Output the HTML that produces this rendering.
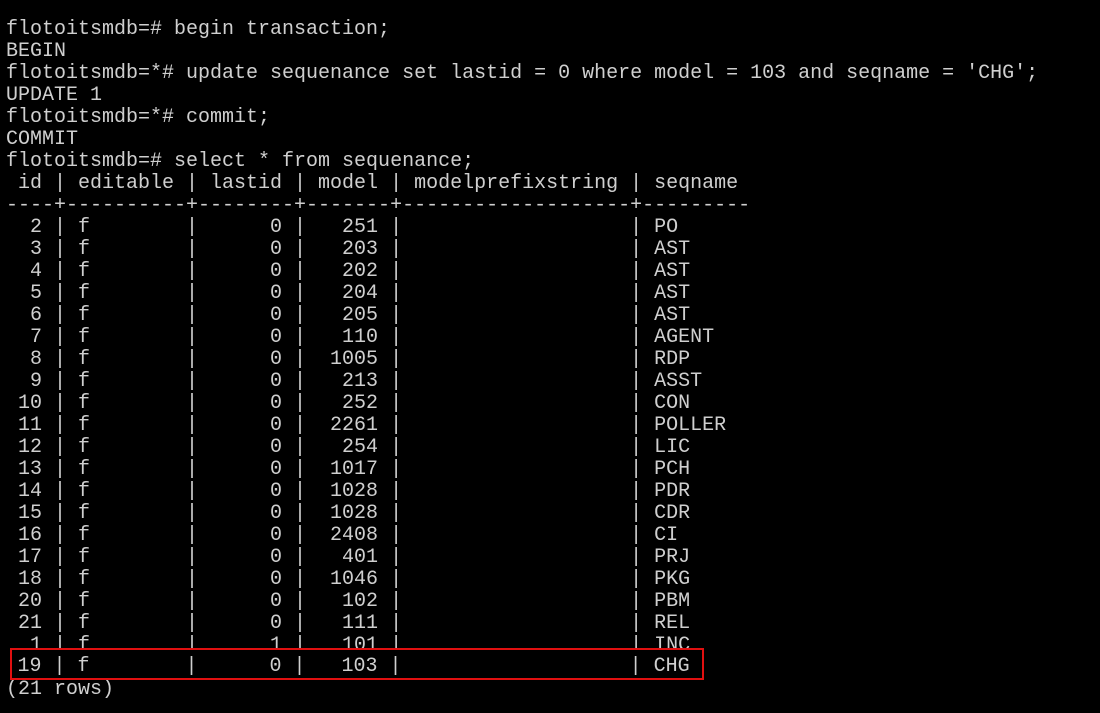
<!DOCTYPE html>
<html><head><meta charset="utf-8"><style>
html,body{margin:0;padding:0;background:#000;width:1100px;height:713px;overflow:hidden}
pre{position:absolute;left:6px;top:19px;margin:0;font-family:"Liberation Mono",monospace;font-size:20px;line-height:22px;color:#cfcfcf}
.box{position:absolute;left:10px;top:648px;width:690px;height:28px;border:2.5px solid #e01010;background:#000}
.box pre{left:5.5px;top:6px}
</style></head><body>
<pre>flotoitsmdb=# begin transaction;
BEGIN
flotoitsmdb=*# update sequenance set lastid = 0 where model = 103 and seqname = 'CHG';
UPDATE 1
flotoitsmdb=*# commit;
COMMIT
flotoitsmdb=# select * from sequenance;
 id | editable | lastid | model | modelprefixstring | seqname
----+----------+--------+-------+-------------------+---------
  2 | f        |      0 |   251 |                   | PO
  3 | f        |      0 |   203 |                   | AST
  4 | f        |      0 |   202 |                   | AST
  5 | f        |      0 |   204 |                   | AST
  6 | f        |      0 |   205 |                   | AST
  7 | f        |      0 |   110 |                   | AGENT
  8 | f        |      0 |  1005 |                   | RDP
  9 | f        |      0 |   213 |                   | ASST
 10 | f        |      0 |   252 |                   | CON
 11 | f        |      0 |  2261 |                   | POLLER
 12 | f        |      0 |   254 |                   | LIC
 13 | f        |      0 |  1017 |                   | PCH
 14 | f        |      0 |  1028 |                   | PDR
 15 | f        |      0 |  1028 |                   | CDR
 16 | f        |      0 |  2408 |                   | CI
 17 | f        |      0 |   401 |                   | PRJ
 18 | f        |      0 |  1046 |                   | PKG
 20 | f        |      0 |   102 |                   | PBM
 21 | f        |      0 |   111 |                   | REL
  1 | f        |      1 |   101 |                   | INC

(21 rows)</pre>
<div class="box"><pre>19 | f        |      0 |   103 |                   | CHG</pre></div>
</body></html>
